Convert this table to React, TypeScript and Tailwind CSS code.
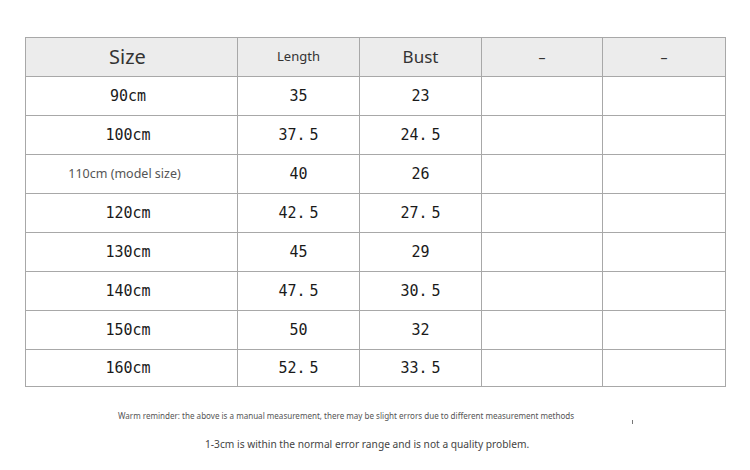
import React from "react";

const rows: [string, string, string][] = [
  ["90cm", "35", "23"],
  ["100cm", "37.5", "24.5"],
  ["110cm (model size)", "40", "26"],
  ["120cm", "42.5", "27.5"],
  ["130cm", "45", "29"],
  ["140cm", "47.5", "30.5"],
  ["150cm", "50", "32"],
  ["160cm", "52.5", "33.5"],
];

const mono = "font-['DejaVu_Sans_Mono',monospace] text-[15px] text-[#1a1a1a]";
const sans = "font-['Noto_Sans',sans-serif]";

// period in the source font sits in a wide cell, so "37.5" reads as "37. 5"
function Num({ v }: { v: string }) {
  const [a, b] = v.split(".");
  if (b === undefined) return <span>{v}</span>;
  return (
    <span>
      {a}
      <span className="inline-block w-[13px] text-left">.</span>
      {b}
    </span>
  );
}

export default function App() {
  return (
    <div className="w-[750px] h-[470px] bg-white pt-[37px] pl-[25px]">
      <div className="grid w-[701px] grid-cols-[211px_121px_121px_120px_122px] gap-px bg-[#a8a8a8] p-px">
        <Head className={`${sans} pr-[8px] text-[20px] text-[#333]`}>Size</Head>
        <Head className={`${sans} text-[13px] text-[#333]`}>Length</Head>
        <Head className={`${sans} text-[17px] text-[#333]`}>Bust</Head>
        <Head className={`${sans} text-[14px] text-[#333]`}>–</Head>
        <Head className={`${sans} text-[14px] text-[#333]`}>–</Head>

        {rows.map(([size, len, bust], i) => {
          const h = i === rows.length - 1 ? "h-[36px]" : "h-[38px]";
          return (
            <React.Fragment key={size}>
              <Cell h={h}>
                {size.includes("model") ? (
                  <span className={`${sans} pr-[14px] text-[12.5px] text-[#555]`}>{size}</span>
                ) : (
                  <span className={`${mono} pr-[7px]`}>{size}</span>
                )}
              </Cell>
              <Cell h={h}>
                <span className={mono}>
                  <Num v={len} />
                </span>
              </Cell>
              <Cell h={h}>
                <span className={mono}>
                  <Num v={bust} />
                </span>
              </Cell>
              <Cell h={h} />
              <Cell h={h} />
            </React.Fragment>
          );
        })}
      </div>

      <div className="relative w-[701px] pt-[23px]">
        <p className={`${sans} ml-[93px] text-[8.05px] leading-[12px] text-[#555]`}>
          Warm reminder: the above is a manual measurement, there may be slight errors due to
          different measurement methods
        </p>
        <span className="absolute left-[607px] top-[33px] h-[4px] w-px bg-[#777]" />
        <p className={`${sans} mt-[15px] ml-[180px] text-[10.2px] leading-[14px] text-[#444]`}>
          1-3cm is within the normal error range and is not a quality problem.
        </p>
      </div>
    </div>
  );
}

function Head({ className, children }: { className: string; children: React.ReactNode }) {
  return (
    <div className={`flex h-[38px] items-center justify-center bg-[#ececec] ${className}`}>
      {children}
    </div>
  );
}

function Cell({ h, children }: { h: string; children?: React.ReactNode }) {
  return <div className={`flex ${h} items-center justify-center bg-white`}>{children}</div>;
}
